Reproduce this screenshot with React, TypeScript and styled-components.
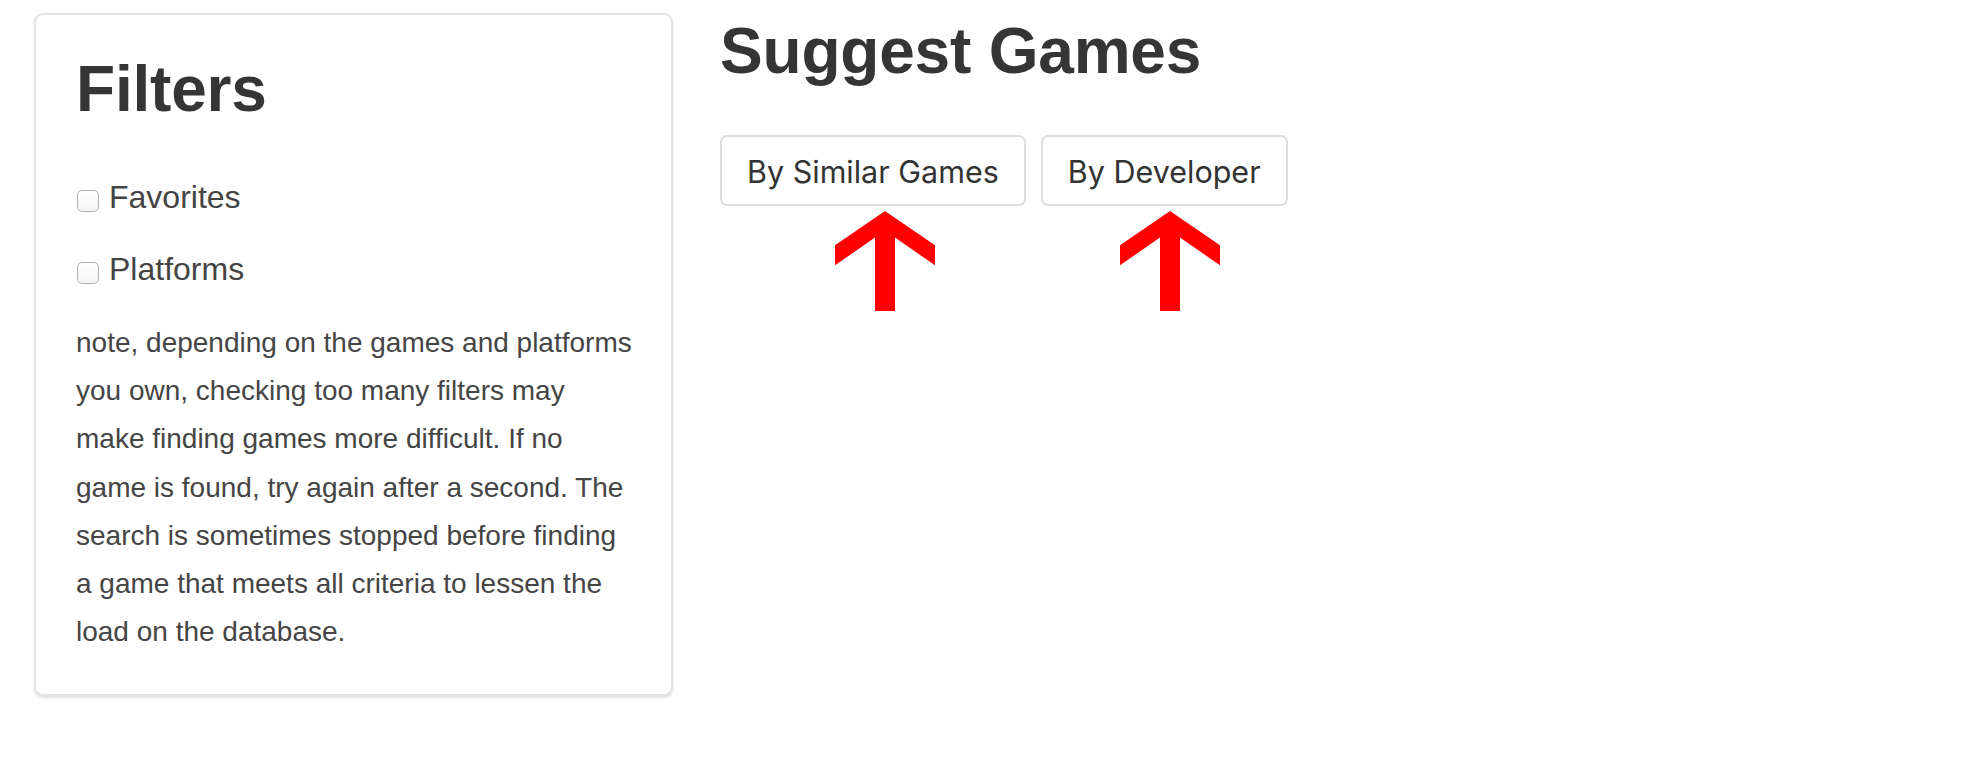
import React from "react";
import styled, { createGlobalStyle } from "styled-components";

const GlobalStyle = createGlobalStyle`
  html, body {
    margin: 0;
    padding: 0;
    background: #ffffff;
  }
  body {
    font-family: "Liberation Sans", Arial, Helvetica, sans-serif;
    color: #333333;
  }
  * { box-sizing: border-box; }
`;

const Page = styled.div`
  display: flex;
  align-items: flex-start;
  gap: 47px;
  padding: 13px 0 0 34px;
  width: 1962px;
  height: 768px;
`;

const Card = styled.aside`
  display: flex;
  flex-direction: column;
  width: 639px;
  padding: 38px 36px 38px 40px;
  border: 2px solid #e4e4e4;
  border-radius: 9px;
  background: #ffffff;
  box-shadow: 0 2px 3px rgba(0, 0, 0, 0.13);
`;

const Heading = styled.h1`
  margin: 0;
  font-family: "Liberation Sans", Arial, Helvetica, sans-serif;
  font-weight: 700;
  font-size: 64px;
  line-height: 72px;
  color: #353535;
  letter-spacing: -0.2px;
`;

const FilterRow = styled.label<{ $first?: boolean }>`
  display: flex;
  align-items: flex-start;
  gap: 10px;
  margin-top: ${(p) => (p.$first ? "54px" : "36px")};
  font-size: 32px;
  line-height: 36px;
  color: #444444;
  cursor: pointer;
`;

const Check = styled.input.attrs({ type: "checkbox" })`
  appearance: none;
  -webkit-appearance: none;
  flex: none;
  width: 22px;
  height: 22px;
  margin: 11px 0 0 1px;
  border: 1px solid #b4b4b4;
  border-radius: 5px;
  background: linear-gradient(#ffffff, #f4f4f4);
  box-shadow: inset 0 1px 0 rgba(255, 255, 255, 0.8);
`;

const Note = styled.p`
  margin: 32px 0 0 0;
  font-size: 28px;
  line-height: 48.2px;
  color: #454545;
`;

const Main = styled.main`
  display: flex;
  flex-direction: column;
  padding-top: 2px;
`;

const ButtonRow = styled.div`
  position: relative;
  display: flex;
  gap: 15px;
  margin-top: 48px;
`;

const ChoiceButton = styled.button`
  height: 71px;
  padding: 2px 25px 0;
  border: 2px solid #dedede;
  border-radius: 7px;
  background: #ffffff;
  font-family: Inter, "Liberation Sans", Arial, sans-serif;
  font-size: 30.5px;
  font-weight: 400;
  color: #333333;
  letter-spacing: 0;
  cursor: pointer;
`;

const ArrowMark = styled.svg<{ $left: number }>`
  position: absolute;
  top: 76px;
  left: ${(p) => p.$left}px;
  width: 100px;
  height: 100px;
`;

const Arrow = ({ left }: { left: number }) => (
  <ArrowMark $left={left} viewBox="0 0 100 100" aria-hidden="true">
    <polygon
      points="50,0 0,34.3 0,54.3 40,26.6 40,100 60,100 60,26.6 100,54.3 100,34.3"
      fill="#ff0000"
    />
  </ArrowMark>
);

export default function App() {
  return (
    <>
      <GlobalStyle />
      <Page>
        <Card>
          <Heading>Filters</Heading>
          <FilterRow $first>
            <Check />
            <span>Favorites</span>
          </FilterRow>
          <FilterRow>
            <Check />
            <span>Platforms</span>
          </FilterRow>
          <Note>
            note, depending on the games and platforms you own, checking too many
            filters may make finding games more difficult. If no game is found, try
            again after a second. The search is sometimes stopped before finding a
            game that meets all criteria to lessen the load on the database.
          </Note>
        </Card>
        <Main>
          <Heading>Suggest Games</Heading>
          <ButtonRow>
            <ChoiceButton>By Similar Games</ChoiceButton>
            <ChoiceButton>By Developer</ChoiceButton>
            <Arrow left={115} />
            <Arrow left={400} />
          </ButtonRow>
        </Main>
      </Page>
    </>
  );
}
